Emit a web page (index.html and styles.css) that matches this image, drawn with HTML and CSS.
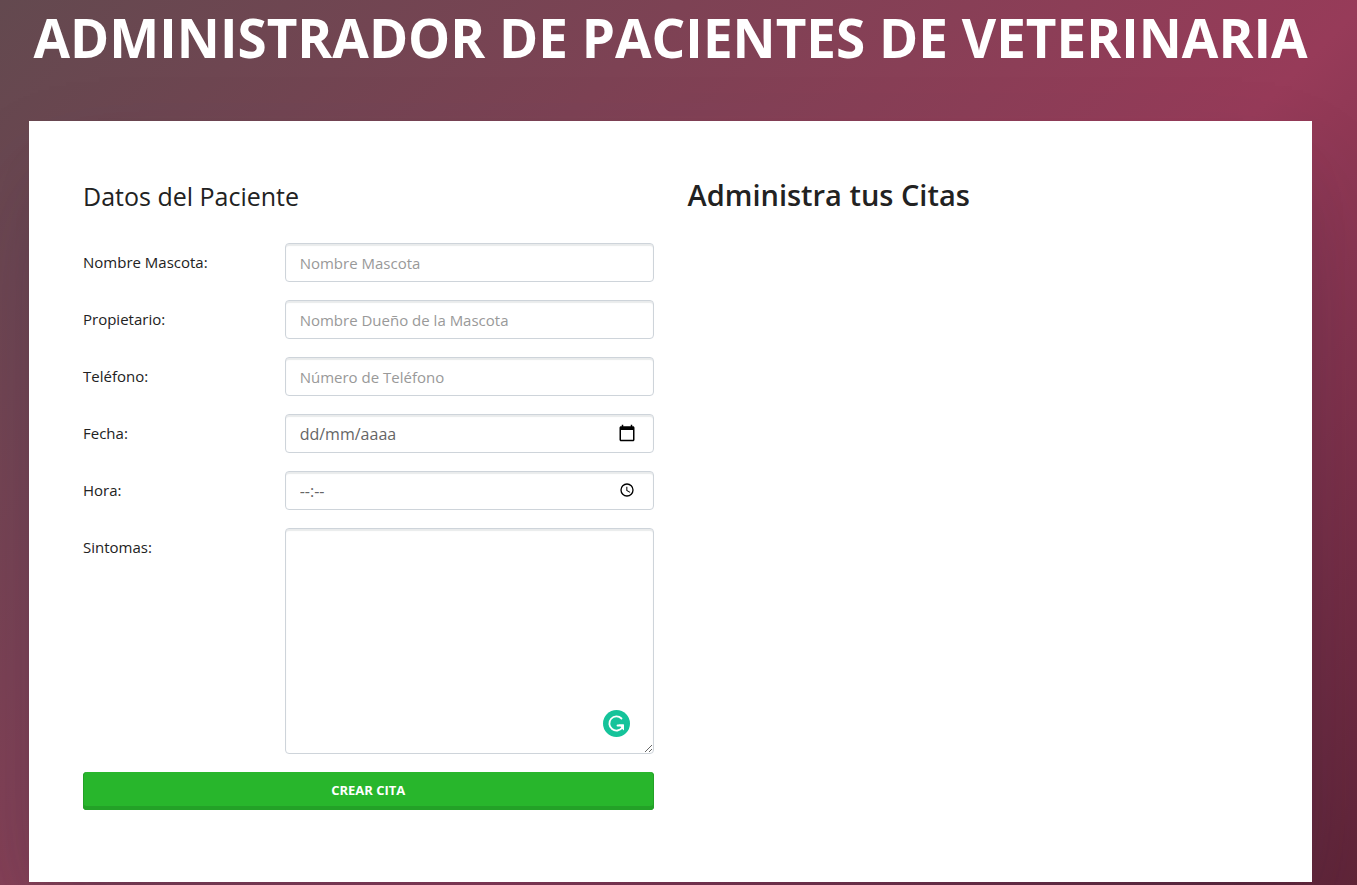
FILE: index.html
```html
<!DOCTYPE html>
<html lang="es">
<head>
  <meta charset="utf-8">
  <meta name="viewport" content="width=device-width, initial-scale=1">
  <title>Administrador de Pacientes de Veterinaria</title>
  <link rel="stylesheet" href="styles.css">
</head>
<body>
  <div class="page">
    <h1 class="page-title">Administrador de Pacientes de Veterinaria</h1>
    <main class="card">
      <section>
        <form class="form">
          <h2 class="form-title">Datos del Paciente</h2>
          <div class="row">
            <label class="label" for="mascota">Nombre Mascota:</label>
            <input class="control" type="text" id="mascota" placeholder="Nombre Mascota">
          </div>
          <div class="row">
            <label class="label" for="propietario">Propietario:</label>
            <input class="control" type="text" id="propietario" placeholder="Nombre Dueño de la Mascota">
          </div>
          <div class="row">
            <label class="label" for="telefono">Teléfono:</label>
            <input class="control" type="tel" id="telefono" placeholder="Número de Teléfono">
          </div>
          <div class="row">
            <label class="label" for="fecha">Fecha:</label>
            <div class="field">
              <input class="control control-picker" type="text" id="fecha" placeholder="dd/mm/aaaa">
              <button class="picker" type="button" aria-label="Elegir fecha">
                <svg width="18" height="18" viewBox="0 0 24 24"><path d="M20 3h-1V1h-2v2H7V1H5v2H4c-1.100 0-2 .9-2 2v16c0 1.100.9 2 2 2h16c1.100 0 2-.9 2-2V5c0-1.100-.9-2-2-2zm0 18H4V8h16v13z"/></svg>
              </button>
            </div>
          </div>
          <div class="row">
            <label class="label" for="hora">Hora:</label>
            <div class="field">
              <input class="control control-picker" type="text" id="hora" placeholder="--:--">
              <button class="picker" type="button" aria-label="Elegir hora">
                <svg width="16" height="16" viewBox="0 0 24 24"><path d="M12 2a10 10 0 1 0 0 20 10 10 0 0 0 0-20zm0 18a8 8 0 1 1 0-16 8 8 0 0 1 0 16zm.5-13H11v6l5.200 3.200.8-1.300-4.500-2.700z"/></svg>
              </button>
            </div>
          </div>
          <div class="row">
            <label class="label" for="sintomas">Sintomas:</label>
            <div class="field">
              <textarea class="control control-area" id="sintomas"></textarea>
              <svg class="assistant" viewBox="0 0 27 27" aria-hidden="true">
                <circle cx="13.500" cy="13.500" r="13.500" fill="#15c39a"/>
                <path d="M18.500 8.500A7.100 7.100 0 1 0 19.300 17.500M14.500 15.500H20" fill="none" stroke="#fff" stroke-width="1.800" stroke-linecap="round"/>
                <path d="M15.500 14.600H21V20.600L19.200 19 17.800 16.400z" fill="#fff"/>
              </svg>
            </div>
          </div>
          <button class="submit" type="submit">Crear Cita</button>
        </form>
      </section>
      <section>
        <h2 class="list-title">Administra tus Citas</h2>
      </section>
    </main>
  </div>
</body>
</html>
```
FILE: styles.css
```css
*,
*::before,
*::after {
  box-sizing: border-box;
}

body {
  margin: 0;
  min-height: 100vh;
  background: linear-gradient(135deg, #63494f 0%, #973b59 61%, #5f2437 100%);
  color: #222;
  font: 15px/24px "Open Sans", "Noto Sans", sans-serif;
}

.page {
  padding: 0 45px 3px 29px;
}

.page-title {
  margin: 0 0 45px;
  color: #fff;
  font-size: 53px;
  font-weight: 700;
  line-height: 76px;
  text-align: center;
  text-transform: uppercase;
}

.card {
  display: grid;
  grid-template-columns: 1fr 1fr;
  gap: 34px;
  padding: 54px 54px 72px;
  background: #fff;
  box-shadow: 0 50px 100px -20px rgba(50, 50, 93, 0.25), 0 30px 60px -30px rgba(0, 0, 0, 0.2);
}

.form {
  display: flex;
  flex-direction: column;
  gap: 18px;
}

.form-title,
.list-title {
  margin: 0;
  font-size: 25px;
  font-weight: 400;
  line-height: 42px;
}

.form-title {
  margin-bottom: 8px;
}

.list-title {
  font-size: 29px;
  font-weight: 600;
  line-height: 40px;
}

.row {
  display: grid;
  grid-template-columns: 5fr 11fr;
  gap: 34px;
}

.label {
  padding-top: 7px;
}

.field {
  position: relative;
  display: flex;
}

.control {
  width: 100%;
  min-width: 0;
  height: 39px;
  padding: 2px 14px;
  border: 1px solid #ced4da;
  border-radius: 4px;
  background: #fff;
  box-shadow: inset 0 2px 1px #e9ebec;
  color: #495057;
  font: inherit;
}

.control::placeholder {
  color: #999;
  opacity: 1;
}

.control-picker {
  font-size: 16px;
}

.control-picker::placeholder {
  color: #666;
}

.control-area {
  height: 226px;
  resize: vertical;
}

.picker {
  position: absolute;
  top: 9px;
  right: 17px;
  display: grid;
  place-items: center;
  width: 20px;
  height: 20px;
  padding: 0;
  border: 0;
  background: none;
}

.assistant {
  position: absolute;
  right: 24px;
  bottom: 17px;
  width: 27px;
  height: 27px;
}

.submit {
  height: 38px;
  padding: 0 14px 2px;
  border: 0;
  border-radius: 4px;
  background: #28b62c;
  box-shadow: inset 0 -4px 0 #23a127, inset 1px 0 0 #23a127, inset -1px 0 0 #23a127;
  color: #fff;
  font: 700 13px/20px "Open Sans", "Noto Sans", sans-serif;
  text-transform: uppercase;
}

@media (max-width: 1300px) {
  .page-title {
    font-size: 32px;
  }
}

@media (max-width: 800px) {
  .page-title {
    line-height: 40px;
  }

  .card {
    grid-template-columns: 1fr;
  }
}
```
